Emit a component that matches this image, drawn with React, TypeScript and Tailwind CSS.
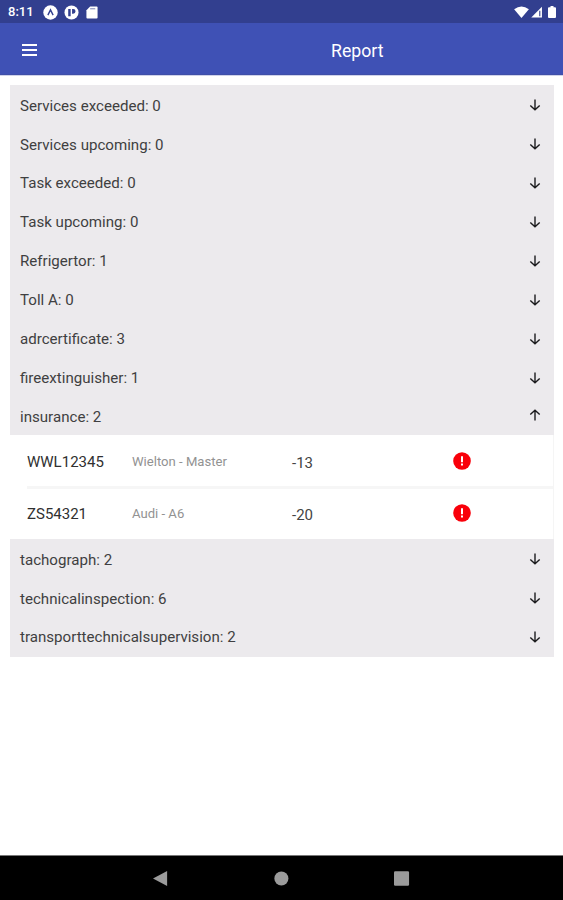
import React from "react";

const before = [
  "Services exceeded: 0",
  "Services upcoming: 0",
  "Task exceeded: 0",
  "Task upcoming: 0",
  "Refrigertor: 1",
  "Toll A: 0",
  "adrcertificate: 3",
  "fireextinguisher: 1",
];
const after = ["tachograph: 2", "technicalinspection: 6", "transporttechnicalsupervision: 2"];
const vehicles = [
  { plate: "WWL12345", model: "Wielton - Master", days: "-13" },
  { plate: "ZS54321", model: "Audi - A6", days: "-20" },
];

function Arrow({ up = false }: { up?: boolean }) {
  return (
    <svg
      viewBox="0 0 12 12"
      className={up ? "mb-[4px] size-3 rotate-180" : "mb-px size-3"}
      fill="none"
      stroke="#1c1c1e"
      strokeWidth="1.4"
    >
      <path d="M6 .4v10.4M1.300 6.400 6 10.800l4.700-4.400" />
    </svg>
  );
}

function Section({ label, open }: { label: string; open?: boolean }) {
  return (
    <div className="flex h-[38.9px] items-center justify-between bg-[#eceaed] pt-[3px] pr-[13px] pl-[10px] text-[15.1px] text-[#3f3f41]">
      <span>{label}</span>
      <Arrow up={open} />
    </div>
  );
}

function StatusBar() {
  return (
    <div className="flex h-[23px] shrink-0 items-center bg-[#323f8f] pt-px pr-[7px] pl-2 text-white">
      <span className="w-[35px] text-[13px] font-medium">8:11</span>
      <svg viewBox="0 0 16 16" className="size-[15px]">
        <circle cx="8" cy="8" r="7.7" fill="#fff" />
        <path d="M5.200 10.800 8 5.200l2.800 5.600" fill="none" stroke="#323f8f" strokeWidth="1.500" />
      </svg>
      <svg viewBox="0 0 16 16" className="ml-[6px] size-[15px]">
        <circle cx="8" cy="8" r="7.500" fill="#fff" />
        <path d="M4.500 4.200h2.600v7.800H4.500zM8.600 4.200h1.200a2.500 2.500 0 0 1 0 5H8.600z" fill="#323f8f" />
      </svg>
      <svg viewBox="0 0 12 14" className="ml-[7px] h-[13px] w-[12px]">
        <path d="M4 .5h7a1 1 0 0 1 1 1v11a1 1 0 0 1-1 1H1a1 1 0 0 1-1-1v-8z" fill="#fff" />
        <path d="M4 3h5.500" stroke="#323f8f" strokeWidth="1" opacity=".7" />
      </svg>
      <svg viewBox="0 0 16 13" className="ml-auto h-3 w-[15px]">
        <path d="M0 3.500Q8-2.500 16 3.500L8 13z" fill="#fff" />
      </svg>
      <svg viewBox="0 0 13 13" className="ml-px h-3 w-[13px]">
        <path d="M12.400.8v11.600H.8z" fill="#fff" />
        <path d="M10 5.200v5.800" stroke="#323f8f" strokeWidth="1.500" opacity=".8" />
      </svg>
      <svg viewBox="0 0 8 12" className="ml-[5px] h-3 w-2">
        <path d="M2.500 0h3v1.200H7a1 1 0 0 1 1 1V11a1 1 0 0 1-1 1H1a1 1 0 0 1-1-1V2.200a1 1 0 0 1 1-1h1.500z" fill="#fff" />
      </svg>
    </div>
  );
}

export default function App() {
  return (
    <div className="flex h-[900px] w-[563px] flex-col overflow-hidden bg-white font-['Roboto',sans-serif]">
      <StatusBar />
      <header className="flex h-[52px] shrink-0 items-center border-b border-[#3f4fa8] bg-[#3f51b5] pt-[3px] pl-[22px] text-white">
        <div className="flex w-[309px] flex-col gap-[3px]">
          <span className="h-[2px] w-[15px] bg-white" />
          <span className="h-[2px] w-[15px] bg-white" />
          <span className="h-[2px] w-[15px] bg-white" />
        </div>
        <h1 className="pt-[2px] text-[17.700px]">Report</h1>
      </header>
      <main className="flex-1 border-t border-[#cfd2ea] pt-[9px] pr-[9px] pl-[10px]">
        {before.map((label) => (
          <Section key={label} label={label} />
        ))}
        <Section label="insurance: 2" open />
        <div className="h-[104px] border-r border-[#f5f5f5]">
          {vehicles.map((v, i) => (
            <div key={v.plate} className="relative flex h-[52px] items-center pl-[17px]">
              {i === 0 && <span className="absolute right-0 bottom-[-2px] left-[17px] h-[3px] bg-[#f6f6f6]" />}
              <span className="w-[105px] pt-[2px] text-[15px] text-[#303030]">{v.plate}</span>
              <span className="w-[160px] pt-[2px] text-[13.1px] text-[#929292]">{v.model}</span>
              <span className="w-[161px] pt-[5px] text-[15px] text-[#444]">{v.days}</span>
              <svg viewBox="0 0 18 18" className="size-[18px]">
                <circle cx="9" cy="9" r="8.800" fill="#f9000a" />
                <path d="M9 4.200v6M9 11.400v2.200" stroke="#fff" strokeWidth="2" />
              </svg>
            </div>
          ))}
        </div>
        <div className="bg-[#eceaed] pb-[0.9px]">
          {after.map((label) => (
            <Section key={label} label={label} />
          ))}
        </div>
      </main>
      <nav className="flex h-[45px] shrink-0 items-center border-t border-[#777] bg-black pl-[153px]">
        <svg viewBox="0 0 249 15" className="h-[15px] w-[257px]" preserveAspectRatio="none" fill="#9b9b9b">
          <path d="M0 7.500 13.700 0v15z" />
          <ellipse cx="124.400" cy="7.500" rx="6.800" ry="7" />
          <rect x="233.500" y=".3" width="14.600" height="14.400" rx="1.200" />
        </svg>
      </nav>
    </div>
  );
}
